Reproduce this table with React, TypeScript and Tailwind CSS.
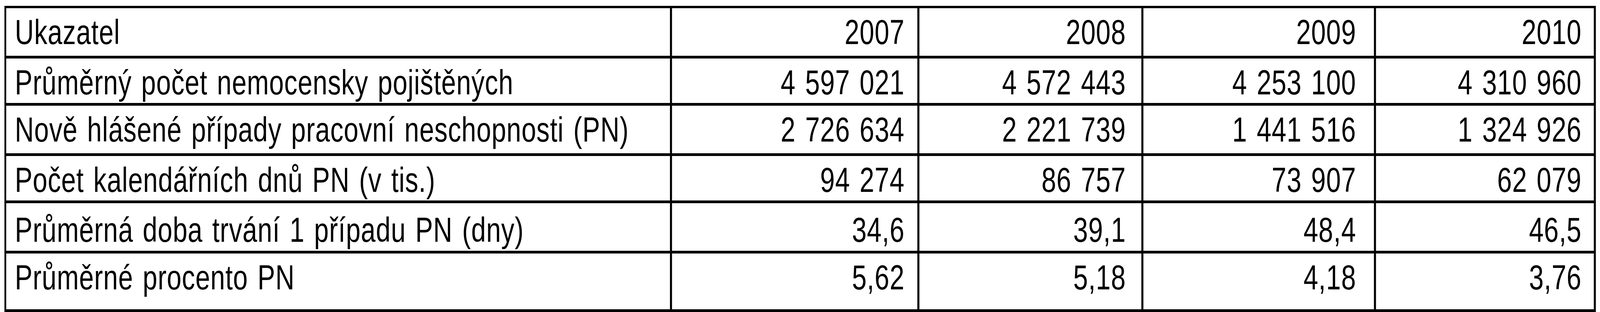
import React, { useLayoutEffect, useState } from 'react';

interface Row {
  label: string;
  values: string[];
  height: string;
  top: string;
}

const rows: Row[] = [
  { label: 'Ukazatel', values: ['2007', '2008', '2009', '2010'], height: 'h-[122px]', top: 'pt-[17px]' },
  { label: 'Průměrný počet nemocensky pojištěných', values: ['4 597 021', '4 572 443', '4 253 100', '4 310 960'], height: 'h-[114px]', top: 'pt-[17px]' },
  { label: 'Nově hlášené případy pracovní neschopnosti (PN)', values: ['2 726 634', '2 221 739', '1 441 516', '1 324 926'], height: 'h-[122px]', top: 'pt-[17px]' },
  { label: 'Počet kalendářních dnů PN (v tis.)', values: ['94 274', '86 757', '73 907', '62 079'], height: 'h-[114px]', top: 'pt-[17px]' },
  { label: 'Průměrná doba trvání 1 případu PN (dny)', values: ['34,6', '39,1', '48,4', '46,5'], height: 'h-[122px]', top: 'pt-[24px]' },
  { label: 'Průměrné procento PN', values: ['5,62', '5,18', '4,18', '3,76'], height: 'h-[143px]', top: 'pt-[17px]' },
];

// width + right padding of each year column
const valueCols = [
  'w-[829px] pr-[43px]',
  'w-[750px] pr-[52px]',
  'w-[779px] pr-[60px]',
  'w-[736px] pr-[41px]',
];

const PAGE_WIDTH = 5407;

// squeeze the sheet horizontally when the window is narrower than the page
const useFitWidth = () => {
  const [scale, setScale] = useState(1);
  useLayoutEffect(() => {
    const update = () => setScale(Math.min(1, window.innerWidth / PAGE_WIDTH));
    update();
    window.addEventListener('resize', update);
    return () => window.removeEventListener('resize', update);
  }, []);
  return scale;
};

const App: React.FC = () => {
  const scale = useFitWidth();

  return (
    <div className="w-full min-h-[800px] overflow-hidden bg-white">
      <div
        className="w-[5407px] pt-[15px] pl-[15px]"
        style={{ transform: `scaleX(${scale})`, transformOrigin: 'left top' }}
      >
        <div className="inline-flex flex-col gap-[7px] bg-black pt-[6px] pl-[6px] pr-[7px] pb-[7px] font-['Liberation_Sans',Arial,sans-serif] text-[89px] leading-none tracking-[1.2px] [word-spacing:6px] text-black">
          {rows.map(row => (
            <div key={row.label} className={`flex gap-[7px] ${row.height}`}>
              <div className={`w-[2243px] shrink-0 bg-white pl-[29px] whitespace-nowrap ${row.top}`}>
                {row.label}
              </div>
              {row.values.map((v, j) => (
                <div
                  key={j}
                  className={`shrink-0 bg-white text-right whitespace-nowrap ${valueCols[j]} ${row.top}`}
                >
                  {v}
                </div>
              ))}
            </div>
          ))}
        </div>
      </div>
    </div>
  );
};

export default App;
